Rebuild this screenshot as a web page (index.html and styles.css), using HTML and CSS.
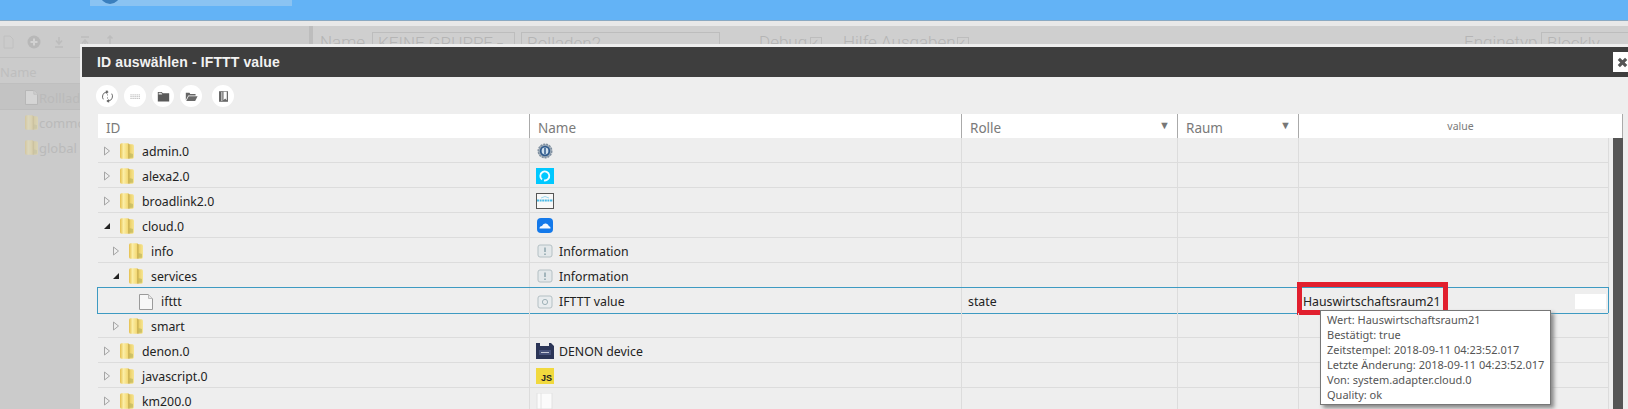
FILE: index.html
```html
<!DOCTYPE html>
<html lang="de">
<head>
<meta charset="utf-8">
<title>ID auswählen</title>
<link rel="stylesheet" href="styles.css">
</head>
<body>
<svg class="defs" width="0" height="0" aria-hidden="true">
  <defs>
    <linearGradient id="fg" x1="0" y1="0" x2="1" y2="0">
      <stop offset="0" stop-color="#e5bf4e"/>
      <stop offset=".25" stop-color="#fbeea6"/>
      <stop offset=".55" stop-color="#f3d976"/>
      <stop offset=".63" stop-color="#c3a84a"/>
      <stop offset=".72" stop-color="#ecd16a"/>
      <stop offset="1" stop-color="#f6e594"/>
    </linearGradient>
    <symbol id="folder" viewBox="0 0 14 16">
      <path d="M0 2Q0 .3 1.500 .3H8L9.500 1.300H12.500Q14 1.300 14 3V13.800Q14 15.800 12.500 15.800H1.500Q0 15.800 0 14Z" fill="url(#fg)"/>
      <path d="M9.500 10 13 11V14.800H9.500Z" fill="#b7b35a" opacity=".6"/>
    </symbol>
    <symbol id="file" viewBox="0 0 14 16">
      <path d="M.5.500H9.500L13.500 4.500V15.500H.5Z" fill="#f7f7f7" stroke="#9a9a9a"/>
      <path d="M9.500.500V4.500H13.500" fill="#e6e6e6" stroke="#bbb"/>
    </symbol>
    <symbol id="arrow-r" viewBox="0 0 8 10"><path d="M1.500 1 6.500 5 1.500 9Z" fill="none" stroke="#a5a5a5"/></symbol>
    <symbol id="arrow-d" viewBox="0 0 8 10"><path d="M7 2V8H1Z" fill="#222"/></symbol>
    <symbol id="ic-info" viewBox="0 0 16 16">
      <rect x="1" y="2" width="14" height="12" rx="2" fill="#e3e8ea" stroke="#b4c0c4"/>
      <path d="M8 4.500V9M8 10.500V12" stroke="#87a0a8" stroke-width="1.400"/>
    </symbol>
    <symbol id="ic-state" viewBox="0 0 16 16">
      <rect x="1" y="2" width="14" height="12" rx="2" fill="#e8ecee" stroke="#b4c0c4"/>
      <circle cx="8" cy="8" r="2.600" fill="none" stroke="#9fb2b8"/>
    </symbol>
  </defs>
</svg>

<header class="appbar"><div class="apptab"><span class="applogo"></span></div></header>
<div class="appgap"></div>

<main class="workspace">
  <aside class="scripts">
    <div class="scripts-tools">
      <svg class="st" viewBox="0 0 14 14"><path d="M3 1H9L12 4V13H3Z" fill="none" stroke="#c0c0c0"/></svg>
      <svg class="st" viewBox="0 0 14 14"><circle cx="7" cy="7" r="6.500" fill="#b8b8b8"/><path d="M7 3.500V10.500M3.500 7H10.500" stroke="#d2d2d2" stroke-width="2"/></svg>
      <svg class="st" viewBox="0 0 14 14"><path d="M7 2V8M4 5.500 7 9 10 5.500M3 12H11" fill="none" stroke="#bdbdbd" stroke-width="1.500"/></svg>
      <svg class="st" viewBox="0 0 14 14"><path d="M3 2H11M7 12V6M4 8.500 7 5 10 8.500" fill="none" stroke="#bdbdbd" stroke-width="1.500"/></svg>
      <svg class="st" viewBox="0 0 14 14"><path d="M7 1V13M4.500 3.500 7 1 9.500 3.500M4.500 10.500 7 13 9.500 10.500" fill="none" stroke="#bdbdbd" stroke-width="1.500"/></svg>
    </div>
    <div class="scripts-head">Name</div>
    <div class="scripts-row active"><svg class="si"><use href="#file"/></svg>Rollladen2</div>
    <div class="scripts-row"><svg class="si"><use href="#folder"/></svg>common</div>
    <div class="scripts-row"><svg class="si"><use href="#folder"/></svg>global</div>
  </aside>
  <section class="editor">
    <span class="elabel lname">Name</span>
    <span class="ebox egroup">KEINE GRUPPE <i class="caret">▾</i></span>
    <span class="ebox ename">Rolladen2</span>
    <span class="elabel edebug">Debug</span><span class="echeck">✓</span>
    <span class="elabel ehelp">Hilfe Ausgaben</span><span class="echeck">✓</span>
    <span class="elabel eengine">Enginetyp</span>
    <span class="ebox eblockly">Blockly</span>
  </section>
</main>

<div class="dialog">
  <div class="dialog-title">ID auswählen - IFTTT value
    <span class="dialog-close">
      <svg viewBox="0 0 12 12" width="11" height="11"><path d="M2 2 10 10M10 2 2 10" stroke="#555" stroke-width="3.400"/></svg>
    </span>
  </div>
  <div class="toolbar">
    <button class="tool"><svg viewBox="0 0 16 16"><path d="M2.800 11.500A6 6 0 0 1 6.500 2.400M13.200 4.500A6 6 0 0 1 9.500 13.600" fill="none" stroke="#666" stroke-width="1.200"/><path d="M8 .5V15.500" stroke="#888" stroke-width=".8" stroke-dasharray="2.500 1.500"/><path d="M6 .3 9.500 2.500 6 4.800ZM10 11.200 6.500 13.500 10 15.700Z" fill="#666"/></svg></button>
    <button class="tool"><svg viewBox="0 0 16 16"><path d="M2 6H14M2 8.200H14M2 10.400H14" stroke="#777" stroke-width="1" stroke-dasharray="1 1.500" fill="none"/></svg></button>
    <button class="tool"><svg viewBox="0 0 16 16"><path d="M1 2.500H6L7 4H15V14H1Z" fill="#5a5a5a"/><path d="M2 3.500H5.500L6.500 5.500H2Z" fill="#ddd"/></svg></button>
    <button class="tool"><svg viewBox="0 0 16 16"><path d="M1 3.500H5.500L6.500 5H13V6.800H4L1 12.500Z" fill="#666"/><path d="M4.500 7.800H15.500L12.500 13.500H1.500Z" fill="#6a6a6a"/></svg></button>
    <button class="tool tool-far"><svg viewBox="0 0 16 16"><path d="M2.500 1.500H13.500V14.500H2.500Z" fill="#666"/><path d="M5.500 2.500H6.500V13.500H5.500ZM8 2H12V12.500L10 10.500 8 12.500Z" fill="#fff"/></svg></button>
  </div>

  <div class="tablewrap">
    <div class="thead">
      <div class="th">ID</div>
      <div class="th">Name</div>
      <div class="th th-sort">Rolle<i class="sort">▼</i></div>
      <div class="th th-sort">Raum<i class="sort">▼</i></div>
      <div class="th th-value">value</div>
    </div>
    <div class="tbody">
      <div class="rows">
        <div class="row"><div class="cell"><svg class="tw"><use href="#arrow-r"/></svg><svg class="fo"><use href="#folder"/></svg>admin.0</div>
          <div class="cell cname"><svg class="logo" viewBox="0 0 18 16"><circle cx="9" cy="8" r="6.800" fill="#9aa8b6" stroke="#7f8f9f" stroke-width="1.400" stroke-dasharray="2 1"/><circle cx="9" cy="8" r="5.200" fill="#2f5a8c"/><circle cx="9" cy="8" r="3.400" fill="#cfe0ee"/><path d="M9 5V11" stroke="#2f5a8c" stroke-width="1.500"/></svg></div><div class="cell"></div><div class="cell"></div><div class="cell"></div></div>
        <div class="row"><div class="cell"><svg class="tw"><use href="#arrow-r"/></svg><svg class="fo"><use href="#folder"/></svg>alexa2.0</div>
          <div class="cell cname"><svg class="logo" viewBox="0 0 18 16"><rect width="18" height="16" fill="#00c8ff"/><path d="M6 11.500A4.500 4.500 0 1 1 8 12.400" fill="none" stroke="#f2fcff" stroke-width="1.800"/></svg></div><div class="cell"></div><div class="cell"></div><div class="cell"></div></div>
        <div class="row"><div class="cell"><svg class="tw"><use href="#arrow-r"/></svg><svg class="fo"><use href="#folder"/></svg>broadlink2.0</div>
          <div class="cell cname"><svg class="logo" viewBox="0 0 18 16"><rect x=".5" y=".5" width="17" height="15" fill="#f8f8f8" stroke="#555"/><path d="M1 7.500H17" stroke="#49b9e6" stroke-width="2" stroke-dasharray="2 .6"/><path d="M5 5Q9 2 13 5" stroke="#9bd7ef" fill="none"/></svg></div><div class="cell"></div><div class="cell"></div><div class="cell"></div></div>
        <div class="row"><div class="cell"><svg class="tw"><use href="#arrow-d"/></svg><svg class="fo"><use href="#folder"/></svg>cloud.0</div>
          <div class="cell cname"><svg class="logo" viewBox="0 0 18 16"><rect x="1" y="0" width="16" height="15" rx="4" fill="#1479ea"/><path d="M3.500 10.500Q3.500 8 6 8Q7 5 10 5.500Q12.500 6 12.800 8Q15 8.500 14.500 10.500Z" fill="#f4f8fe"/></svg></div><div class="cell"></div><div class="cell"></div><div class="cell"></div></div>
        <div class="row"><div class="cell l1"><svg class="tw"><use href="#arrow-r"/></svg><svg class="fo"><use href="#folder"/></svg>info</div>
          <div class="cell cname"><svg class="logo"><use href="#ic-info"/></svg>Information</div><div class="cell"></div><div class="cell"></div><div class="cell"></div></div>
        <div class="row"><div class="cell l1"><svg class="tw"><use href="#arrow-d"/></svg><svg class="fo"><use href="#folder"/></svg>services</div>
          <div class="cell cname"><svg class="logo"><use href="#ic-info"/></svg>Information</div><div class="cell"></div><div class="cell"></div><div class="cell"></div></div>
        <div class="row sel"><div class="cell l2"><svg class="tw"></svg><svg class="fo"><use href="#file"/></svg>ifttt</div>
          <div class="cell cname"><svg class="logo"><use href="#ic-state"/></svg>IFTTT value</div><div class="cell crole">state</div><div class="cell"></div>
          <div class="cell cvalue">
            <span class="val">Hauswirtschaftsraum21</span>
            <span class="mini"></span>
            <span class="redbox"></span>
            <div class="tooltip">
              <div>Wert: Hauswirtschaftsraum21</div>
              <div>Bestätigt: true</div>
              <div>Zeitstempel: 2018-09-11 04:23:52.017</div>
              <div>Letzte Änderung: 2018-09-11 04:23:52.017</div>
              <div>Von: system.adapter.cloud.0</div>
              <div>Quality: ok</div>
            </div>
          </div></div>
        <div class="row"><div class="cell l1"><svg class="tw"><use href="#arrow-r"/></svg><svg class="fo"><use href="#folder"/></svg>smart</div>
          <div class="cell cname"></div><div class="cell"></div><div class="cell"></div><div class="cell"></div></div>
        <div class="row"><div class="cell"><svg class="tw"><use href="#arrow-r"/></svg><svg class="fo"><use href="#folder"/></svg>denon.0</div>
          <div class="cell cname"><svg class="logo" viewBox="0 0 18 16"><path d="M0 0H4V3H13V0H15L18 3V16H0Z" fill="#2b3557"/><rect x="3" y="7" width="12" height="5" fill="#46517a"/><path d="M5 9.500H13" stroke="#c4c8d6"/></svg>DENON device</div><div class="cell"></div><div class="cell"></div><div class="cell"></div></div>
        <div class="row"><div class="cell"><svg class="tw"><use href="#arrow-r"/></svg><svg class="fo"><use href="#folder"/></svg>javascript.0</div>
          <div class="cell cname"><span class="js">JS</span></div><div class="cell"></div><div class="cell"></div><div class="cell"></div></div>
        <div class="row"><div class="cell"><svg class="tw"><use href="#arrow-r"/></svg><svg class="fo"><use href="#folder"/></svg>km200.0</div>
          <div class="cell cname"><svg class="logo" viewBox="0 0 18 16"><rect x="1" y="0" width="15" height="16" fill="#fbfbfb" stroke="#e2e2e2"/><path d="M5 0V16" stroke="#e4e4e4"/></svg></div><div class="cell"></div><div class="cell"></div><div class="cell"></div></div>
      </div>
      <div class="scrollbar"></div>
    </div>
  </div>
</div>
</body>
</html>
```
FILE: styles.css
```css
* { box-sizing: border-box; }
html, body { margin: 0; height: 409px; overflow: hidden; }
body {
  width: 1628px;
  position: relative;
  background: #cfcfcf;
  font-family: "Noto Sans", "Open Sans", "Liberation Sans", sans-serif;
  display: flex;
  flex-direction: column;
}
.defs { position: absolute; }

.appbar {
  height: 21px;
  flex: none;
  background: #63b3f6;
  border-bottom: 1px solid #8aa9c2;
}
.apptab {
  margin-left: 90px;
  width: 202px;
  height: 6px;
  background: #8ac3f2;
  overflow: hidden;
  position: relative;
}
.applogo {
  position: absolute;
  left: 10px;
  top: -16px;
  width: 20px;
  height: 20px;
  border-radius: 50%;
  background: #3a7fbe;
}
.appgap { height: 5px; flex: none; background: #e8e8e8; }

.workspace { flex: 1; display: flex; min-height: 0; }
.scripts {
  width: 313px;
  flex: none;
  background: #cbcbcb;
  border-right: 4px solid #bdbdbd;
  color: #bababa;
  font-size: 13px;
}
.scripts-tools {
  height: 32px;
  display: flex;
  align-items: center;
  gap: 11.500px;
  padding-left: 1px;
  border-bottom: 1px solid #c0c0c0;
}
.st { width: 14px; height: 14px; flex: none; }
.scripts-head {
  height: 26px;
  display: flex;
  align-items: center;
  padding-top: 3px;
  border-bottom: 1px solid #bfbfbf;
  font-size: 13px;
  color: #bebebe;
}
.scripts-row {
  height: 25px;
  display: flex;
  align-items: center;
  padding-left: 25px;
  font-size: 13px;
  gap: 1px;
}
.scripts-row.active {
  background: #c3c3c3;
  height: 26px;
  padding-top: 2px;
  border-bottom: 1px solid #bdbdbd;
}
.si { width: 13px; height: 15px; opacity: .35; flex: none; }

.editor {
  flex: 1;
  background: #cfcfcf;
  color: #b5b5b5;
  display: flex;
  align-items: flex-start;
  padding: 6px 0 0 7px;
  font-family: Roboto, "Noto Sans", sans-serif;
  font-weight: 300;
  font-size: 17px;
  line-height: 20px;
  white-space: nowrap;
}
.elabel { flex: none; }
.lname { width: 52px; }
.ebox { flex: none; border: 1px solid #bdbdbd; height: 24px; padding: 0 5px; }
.egroup { width: 143px; }
.caret { font-style: normal; font-size: 12px; }
.ename { width: 199px; margin-left: 6px; }
.edebug { width: 51px; margin-left: 39px; }
.echeck {
  flex: none;
  width: 12px;
  height: 12px;
  border: 1px solid #bdbdbd;
  font-size: 10px;
  line-height: 10px;
  margin-top: 5px;
}
.ehelp { width: 114px; margin-left: 21px; }
.eengine { width: 77px; margin-left: 495px; }
.eblockly { width: 100px; }

.dialog {
  position: absolute;
  left: 80px;
  top: 44px;
  width: 1560px;
  height: 380px;
  background: #eee;
  border: solid #eee;
  border-width: 3px 0 0 2px;
}
.dialog-title {
  height: 30px;
  background: #3e3e3e;
  color: #f2f2f2;
  font: bold 14px/30px "Liberation Sans", Arial, sans-serif;
  letter-spacing: .12px;
  padding-left: 15px;
  position: relative;
}
.dialog-close {
  position: absolute;
  left: 1531px;
  top: 5px;
  width: 20px;
  height: 20px;
  background: #fff;
  display: flex;
  align-items: center;
  padding-left: 4px;
}
.toolbar {
  display: flex;
  gap: 6px;
  padding: 8px 0 0 14px;
  height: 37px;
}
.tool {
  width: 22px;
  height: 22px;
  padding: 0;
  border: 0;
  border-radius: 50%;
  background: #fff;
  display: flex;
  align-items: center;
  justify-content: center;
}
.tool svg { width: 13px; height: 13px; }
.tool-far { margin-left: 4px; }

.tablewrap { margin-left: 16px; width: 1525px; }
.thead {
  display: grid;
  grid-template-columns: 432px 432px 216px 121px 324px;
  height: 24px;
  background: #fff;
  color: #7a7a7a;
  font-size: 13.500px;
}
.th {
  display: flex;
  align-items: center;
  padding: 3px 0 0 8px;
  border-right: 1px solid #aaa;
  position: relative;
}
.th-value { justify-content: center; padding: 0; font-size: 10.500px; }
.sort { position: absolute; right: 7px; top: 4px; font-style: normal; font-size: 11px; line-height: 14px; color: #777; }

.tbody { display: flex; align-items: stretch; }
.rows { width: 1511px; }
.scrollbar { width: 10px; margin-left: 4px; background: #555; }

.row {
  display: grid;
  grid-template-columns: 432px 432px 216px 121px 310px;
  height: 25px;
  border-bottom: 1px solid #dcdcdc;
  color: #222;
  font-size: 12.300px;
}
.row.sel {
  height: 27px;
  margin: -1px 0 -1px -1px;
  width: 1512px;
  grid-template-columns: 432px 432px 216px 121px 309px;
  border: 1px solid #3d9ac2;
  position: relative;
}
.cell {
  display: flex;
  align-items: center;
  padding-top: 2px;
  border-right: 1px solid #dcdcdc;
  min-width: 0;
  position: relative;
}
.cell:first-child { padding-left: 5px; }
.row .l1 { padding-left: 14px; }
.row .l2 { padding-left: 24px; }
.tw { width: 8px; height: 10px; flex: none; }
.fo { width: 14px; height: 16px; margin: 0 8px 0 9px; flex: none; }
.cname { padding-left: 6px; gap: 5px; }
.logo { width: 18px; height: 16px; flex: none; }
.crole { padding-left: 6px; }
.js {
  width: 18px;
  height: 16px;
  background: #f1d93e;
  color: #222;
  font: bold 9px/20px "Liberation Sans", Arial, sans-serif;
  text-align: right;
  padding-right: 2px;
}
.cvalue { padding-left: 4px; border-right: 0; }
.val { white-space: nowrap; }
.mini {
  margin: 0 2px 0 auto;
  width: 31px;
  height: 15px;
  background: #fff;
}
.redbox {
  position: absolute;
  left: -2px;
  top: -6px;
  width: 151px;
  height: 33px;
  border: 5px solid #e11f2e;
}
.tooltip {
  position: absolute;
  left: 21px;
  top: 22px;
  width: 231px;
  height: 95px;
  background: #fff;
  border: 1px solid #777;
  box-shadow: 3px 3px 4px #888;
  color: #555;
  font-size: 11px;
  line-height: 15px;
  padding: 1px 0 0 6px;
  white-space: nowrap;
  z-index: 2;
}
```
